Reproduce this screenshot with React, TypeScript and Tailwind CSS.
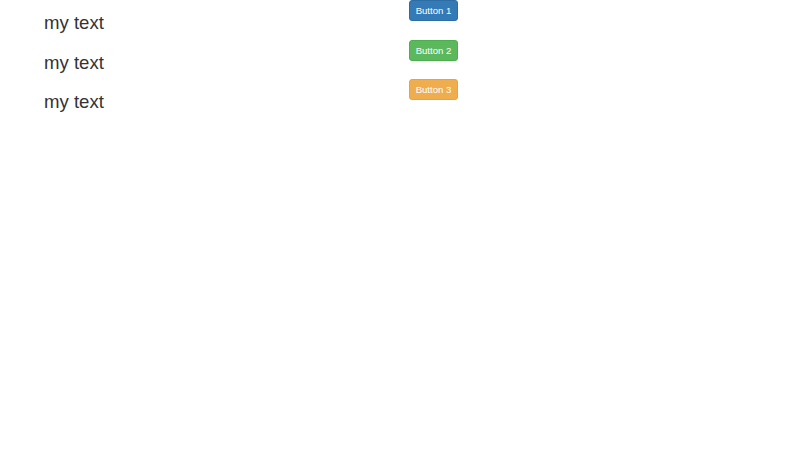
const rows = [
  { label: "Button 1", cls: "bg-[#337ab7] border-[#2e6da4]" },
  { label: "Button 2", cls: "bg-[#5cb85c] border-[#4cae4c]" },
  { label: "Button 3", cls: "bg-[#f0ad4e] border-[#eea236]" },
];

export default function App() {
  return (
    <div className="flex min-h-[450px] w-[800px] bg-white font-['Liberation_Sans',Arial,sans-serif] text-[#333]">
      {/* left column */}
      <div className="flex w-[409px] flex-col pl-[44px]">
        {rows.map((r) => (
          <div key={r.label} className="h-[39.5px] pt-[14px] text-[18.6px] leading-[18.6px]">
            my text
          </div>
        ))}
      </div>

      {/* right column */}
      <div className="flex flex-col">
        {rows.map((r) => (
          <div key={r.label} className="flex h-[39.5px] items-start">
            <button
              className={`block h-[21px] w-[49px] rounded-[3px] border pt-[1px] text-[9.6px] leading-none text-white ${r.cls}`}
            >
              {r.label}
            </button>
          </div>
        ))}
      </div>
    </div>
  );
}
